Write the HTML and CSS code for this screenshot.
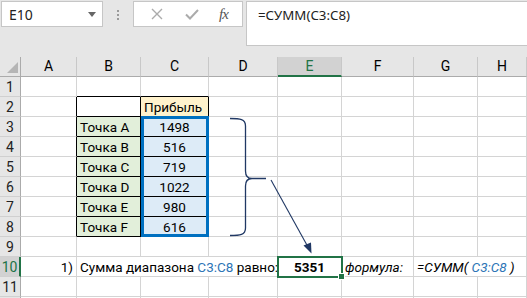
FILE: index.html
```html
<!DOCTYPE html>
<html lang="ru">
<head>
    <meta charset="UTF-8">
    <title>СУММ</title>
    <link rel="stylesheet" href="styles.css">
</head>
<body>

<div class="bar">
    <div class="namebox">
        <span>E10</span>
        <svg class="drop" width="8" height="5" viewBox="0 0 8 5"><path d="M0 0H8L4 5Z" fill="#666"/></svg>
    </div>
    <div class="dots"><i></i><i></i><i></i></div>
    <div class="buttons">
        <svg width="14" height="14" viewBox="0 0 14 14"><path d="M2 2L12 12M12 2L2 12" stroke="#ababab" stroke-width="1.4" fill="none"/></svg>
        <svg width="14" height="14" viewBox="0 0 14 14"><path d="M1 7.5L5 11.5L13 3" stroke="#ababab" stroke-width="2" fill="none"/></svg>
        <span class="fx">fx</span>
    </div>
    <div class="formula">=СУММ(C3:C8)</div>
</div>

<div class="sheet">
    <div class="row head">
        <div class="corner"><svg width="21" height="19" viewBox="0 0 21 19"><path d="M18 5V16H7Z" fill="#b5b5b5"/></svg></div>
        <div class="col">A</div><div class="col">B</div><div class="col">C</div><div class="col">D</div>
        <div class="col sel">E</div><div class="col">F</div><div class="col">G</div><div class="col">H</div>
    </div>
    <div class="row">
        <div class="rh">1</div><div class="c"></div><div class="c bb"></div><div class="c bb"></div><div class="c"></div>
        <div class="c"></div><div class="c"></div><div class="c"></div><div class="c"></div>
    </div>
    <div class="row">
        <div class="rh">2</div><div class="c br"></div><div class="c box"></div><div class="c box hdr">Прибыль</div><div class="c"></div>
        <div class="c"></div><div class="c"></div><div class="c"></div><div class="c"></div>
    </div>
    <div class="row">
        <div class="rh">3</div><div class="c br"></div><div class="c box name">Точка A</div><div class="c box val first">1498</div><div class="c"></div>
        <div class="c"></div><div class="c"></div><div class="c"></div><div class="c"></div>
    </div>
    <div class="row">
        <div class="rh">4</div><div class="c br"></div><div class="c box name">Точка B</div><div class="c box val">516</div><div class="c"></div>
        <div class="c"></div><div class="c"></div><div class="c"></div><div class="c"></div>
    </div>
    <div class="row">
        <div class="rh">5</div><div class="c br"></div><div class="c box name">Точка C</div><div class="c box val">719</div><div class="c"></div>
        <div class="c"></div><div class="c"></div><div class="c"></div><div class="c"></div>
    </div>
    <div class="row">
        <div class="rh">6</div><div class="c br"></div><div class="c box name">Точка D</div><div class="c box val">1022</div><div class="c"></div>
        <div class="c"></div><div class="c"></div><div class="c"></div><div class="c"></div>
    </div>
    <div class="row">
        <div class="rh">7</div><div class="c br"></div><div class="c box name">Точка E</div><div class="c box val">980</div><div class="c"></div>
        <div class="c"></div><div class="c"></div><div class="c"></div><div class="c"></div>
    </div>
    <div class="row">
        <div class="rh">8</div><div class="c br"></div><div class="c box name">Точка F</div><div class="c box val last">616</div><div class="c"></div>
        <div class="c"></div><div class="c"></div><div class="c"></div><div class="c"></div>
    </div>
    <div class="row">
        <div class="rh">9</div><div class="c"></div><div class="c"></div><div class="c"></div><div class="c"></div>
        <div class="c"></div><div class="c"></div><div class="c"></div><div class="c"></div>
    </div>
    <div class="row">
        <div class="rh sel">10</div><div class="c right">1)</div>
        <div class="c span3">Сумма диапазона <span class="ref">C3:C8</span> равно:</div>
        <div class="c active">5351</div>
        <div class="c it">формула:</div>
        <div class="c it span2">=СУММ( <span class="ref">C3:C8</span> )</div>
    </div>
    <div class="row">
        <div class="rh">11</div><div class="c"></div><div class="c"></div><div class="c"></div><div class="c"></div>
        <div class="c"></div><div class="c"></div><div class="c"></div><div class="c"></div>
    </div>
    <div class="row">
        <div class="rh"></div><div class="c"></div><div class="c"></div><div class="c"></div><div class="c"></div>
        <div class="c"></div><div class="c"></div><div class="c"></div><div class="c"></div>
    </div>

    <!-- brace and arrow drawn over the cells -->
    <svg class="notes" width="527" height="241" viewBox="0 57 527 241">
        <path d="M230 118.5C240 118.5 245.5 119 245.5 126V171C245.5 176 247 178.5 252 178.5H266M252 178.5C247 178.5 245.5 181 245.5 186V228C245.5 235 240 235.5 230 235.5" stroke="#203864" stroke-width="1.3" fill="none"/>
        <path d="M271 180L308 247" stroke="#203864" stroke-width="1.1" fill="none"/>
        <path d="M311.5 253.5L303.5 245.5L311 242.5Z" fill="#203864"/>
    </svg>
</div>

</body>
</html>
```

FILE: styles.css
```css
html
{
    font-family: Roboto, "Liberation Sans", sans-serif;
}

body
{
    margin: 0;
    width: 527px;
    height: 298px;
    overflow: hidden;
    background: #fff;
}

.bar
{
    display: flex;
    align-items: flex-start;
    height: 57px;
    padding: 1px 0 0 1px;
    box-sizing: border-box;
    background: #e6e6e6;
}

.namebox
{
    display: flex;
    align-items: center;
    justify-content: space-between;
    width: 102px;
    height: 26px;
    box-sizing: border-box;
    padding: 0 6px 0 7px;
    background: #fff;
    border: 1px solid #c6c6c6;
    font-family: "Noto Sans", sans-serif;
    font-size: 14px;
    color: #222;
}

.dots
{
    display: flex;
    flex-direction: column;
    gap: 2px;
    width: 30px;
    padding-top: 9px;
    align-items: center;
}

.dots i
{
    width: 2px;
    height: 2px;
    background: #9a9a9a;
}

.buttons
{
    display: flex;
    align-items: center;
    justify-content: space-around;
    width: 110px;
    height: 26px;
    box-sizing: border-box;
    padding: 0 4px 0 6px;
    background: #fff;
    border: 1px solid #c6c6c6;
}

.fx
{
    font-family: "Liberation Serif", serif;
    font-style: italic;
    font-size: 15px;
    color: #555;
    letter-spacing: -1px;
}

.formula
{
    flex: 1;
    height: 45px;
    margin-left: 3px;
    box-sizing: border-box;
    padding: 4px 0 0 11px;
    background: #fff;
    border: 1px solid #c6c6c6;
    border-right: none;
    font-family: "Noto Sans", sans-serif;
    font-size: 13.3px;
    color: #222;
}

.sheet
{
    position: relative;
}

.row
{
    display: grid;
    grid-template-columns: 21px 56px 64px 68px 69px 64px 72px 64px 1fr;
    grid-template-rows: 20px;
    height: 20px;
}

.row > div
{
    box-sizing: border-box;
    padding-top: 1px;
    border-right: 1px solid #d4d4d4;
    border-bottom: 1px solid #d4d4d4;
    font-size: 13.5px;
    line-height: 18px;
    white-space: nowrap;
    color: #000;
}

.head > div
{
    padding-top: 0;
    background: #e6e6e6;
    border-right-color: #c8c8c8;
    border-bottom-color: #ababab;
    text-align: center;
    font-size: 14px;
    line-height: 19px;
}

.head .corner
{
    border-right-color: #ababab;
}

.head .sel
{
    background: #d2d2d2;
    border-bottom: 2px solid #217346;
    color: #217346;
}

.row > .rh
{
    background: #e6e6e6;
    border-right-color: #ababab;
    border-bottom-color: #d0d0d0;
    text-align: center;
    font-size: 14px;
    color: #222;
}

.row > .rh.sel
{
    background: #d2d2d2;
    border-right: 2px solid #217346;
    color: #217346;
}

.c
{
    padding-left: 3px;
    padding-right: 3px;
    overflow: visible;
}

.row > .bb
{
    border-bottom-color: #000;
}

.row > .br
{
    border-right-color: #000;
}

.row > .box
{
    border-right-color: #000;
    border-bottom-color: #000;
}

.hdr
{
    background: #fff2cc;
}

.name
{
    background: #e2efda;
}

.val
{
    position: relative;
    background: #ddebf7;
    text-align: center;
}

/* thick blue frame of the range C3:C8 */
.val::after
{
    content: "";
    position: absolute;
    top: -1px;
    bottom: -1px;
    left: 0;
    right: -1px;
    border-left: 3px solid #0070c0;
    border-right: 3px solid #0070c0;
}

.val.first::after
{
    border-top: 3px solid #0070c0;
}

.val.last::after
{
    border-bottom: 3px solid #0070c0;
}

.right
{
    text-align: right;
}

.span3
{
    grid-column: span 3;
}

.span2
{
    grid-column: span 2;
}

.ref
{
    color: #2e75b6;
}

.it
{
    font-style: italic;
}

.active
{
    position: relative;
    text-align: center;
    font-weight: bold;
    outline: 2px solid #217346;
    outline-offset: -1px;
}

.active::after
{
    content: "";
    position: absolute;
    right: -4px;
    bottom: -4px;
    width: 5px;
    height: 5px;
    background: #217346;
    border: 1px solid #fff;
}

.notes
{
    position: absolute;
    top: 0;
    left: 0;
}
```
